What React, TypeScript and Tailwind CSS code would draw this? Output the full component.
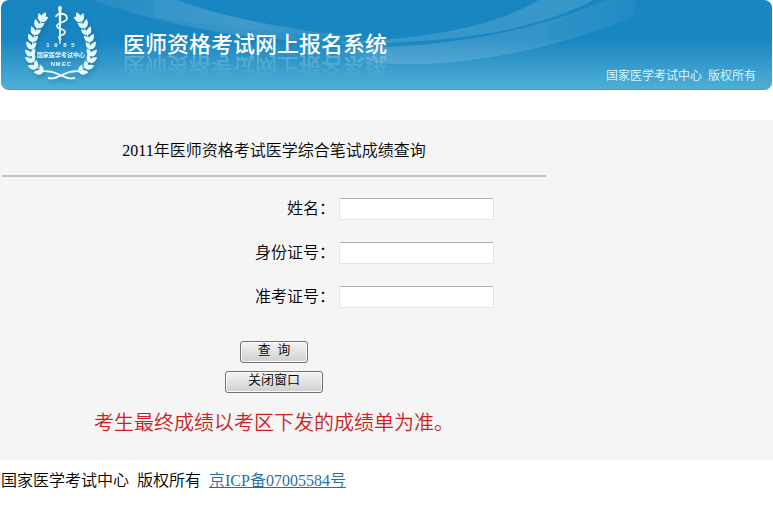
const FIELDS = [
  { id: "name", label: "姓名：" },
  { id: "idCard", label: "身份证号：" },
  { id: "ticket", label: "准考证号：" },
];

// Nodes along one branch of the wreath; a is the growth direction in degrees.
const NODES = [
  { x: 41, y: 22, a: 22 },
  { x: 37, y: 28, a: 25 },
  { x: 34, y: 35, a: 20 },
  { x: 32, y: 42, a: 12 },
  { x: 31, y: 49, a: 4 },
  { x: 31, y: 56, a: -6 },
  { x: 32, y: 62, a: -18 },
  { x: 36, y: 68, a: -34 },
  { x: 42, y: 72, a: -50 },
];

const LEAF = "M0 0C-4-2-3-6 0-9.500C2.500-6 3-2 0 0";

function Branch() {
  return (
    <g>
      <path d={LEAF} transform="translate(41 21) rotate(22)" />
      {NODES.map((n, i) => (
        <g key={i} transform={`translate(${n.x} ${n.y})`}>
          <path d={LEAF} transform={`rotate(${n.a - 42})`} />
          <path d={LEAF} transform={`rotate(${n.a + 28}) scale(.85)`} />
        </g>
      ))}
      <path d="M42 19C32 32 28 50 34 65c4 5 9 7 16 7" fill="none" stroke="currentColor" strokeWidth="1" />
    </g>
  );
}

function Emblem() {
  return (
    <svg
      viewBox="0 0 120 90"
      width="120"
      height="90"
      className="shrink-0 text-[#e9fbff] drop-shadow-[2px_3px_2px_#0b5f9466]"
      fill="currentColor"
      aria-hidden="true"
    >
      <Branch />
      <g transform="translate(120 0) scale(-1 1)">
        <Branch />
      </g>
      <path d="M57.500 8h3L59.600 44h-1.200z" />
      <circle cx="59" cy="8" r="2" />
      <path
        d="M55 17c0-4 10-5 11 1 0 5-10 4-10 8s8 2 8 6-6 2-6 6l2 2"
        fill="none"
        stroke="currentColor"
        strokeWidth="1.800"
      />
      <path
        d="M38 72c10-2 15 0 21 3 7 3 9 4 15 3M82 72c-10-2-15 0-21 3-7 3-8 4-14 3"
        fill="none"
        stroke="currentColor"
        strokeWidth="1.800"
      />
      <g textAnchor="middle" fontWeight="700">
        <text x="47 55 64 72" y="47" fontSize="6" fontFamily="Liberation Sans">1985</text>
        <text x="60" y="57" fontSize="6" fontFamily="Noto Sans CJK SC">国家医学考试中心</text>
        <text x="52 57 63 68" y="66" fontSize="6" fontFamily="Liberation Sans">NMEC</text>
      </g>
    </svg>
  );
}

function Swoosh() {
  return (
    <svg viewBox="0 0 770 90" preserveAspectRatio="none" className="absolute inset-0 h-full w-full" fill="none" aria-hidden="true">
      <defs>
        <linearGradient id="fadeLeft" gradientUnits="userSpaceOnUse" x1="100" y1="0" x2="380" y2="0">
          <stop offset="0" stopColor="#fff" stopOpacity=".06" />
          <stop offset=".5" stopColor="#fff" stopOpacity=".14" />
          <stop offset="1" stopColor="#fff" stopOpacity="0" />
        </linearGradient>
        <linearGradient id="fadeRight" gradientUnits="userSpaceOnUse" x1="340" y1="0" x2="640" y2="0">
          <stop offset="0" stopColor="#fff" stopOpacity="0" />
          <stop offset=".15" stopColor="#fff" stopOpacity=".14" />
          <stop offset=".7" stopColor="#fff" stopOpacity=".12" />
          <stop offset="1" stopColor="#fff" stopOpacity=".03" />
        </linearGradient>
      </defs>
      <path d="M90 0H177C215 16 290 32 390 41C290 48 190 34 90 0Z" fill="url(#fadeLeft)" />
      <path d="M152 0H177C215 16 290 32 390 41C310 36 230 30 152 17Z" fill="#fff" fillOpacity=".04" />
      <path d="M340 42C430 40 495 25 537 0H592C535 30 460 44 340 44Z" fill="#fff" fillOpacity=".14" />
      <path d="M340 49C450 48 530 32 605 0H636L631 17C560 47 480 64 415 65C385 65 360 63 340 61Z" fill="url(#fadeRight)" />
      <path d="M543 26L583 11L588 32L549 41Z" fill="#1886c1" fillOpacity=".12" />
    </svg>
  );
}

function Header() {
  return (
    <header className="relative mx-px flex h-[90px] items-start overflow-hidden rounded-lg border-b border-[#7d8b9c] bg-linear-to-b from-[#1886c1] from-45% to-[#4eafd5]">
      <Swoosh />
      <div className="relative flex w-full">
        <Emblem />
        <h1 className="relative mt-[29px] ml-0.5 h-8 text-[22px] leading-8 font-medium text-white after:absolute after:top-5 after:left-0 after:-scale-y-100 after:mask-t-from-0% after:mask-t-to-90% after:whitespace-nowrap after:opacity-30 after:content-['医师资格考试网上报名系统']">
          医师资格考试网上报名系统
        </h1>
        <p className="mt-16 mr-4 ml-auto text-xs leading-6 font-normal whitespace-pre text-[#d9f4fb]">
          国家医学考试中心  版权所有
        </p>
      </div>
    </header>
  );
}

const buttonClass =
  "h-[22px] rounded-[3px] border border-[#707070] bg-linear-to-b from-[#f4f4f4] to-[#cfcfcf] pb-1 text-[13px] leading-4 whitespace-pre text-black shadow-[inset_0_0_0_1px_#fbfbfb]";

export default function App() {
  return (
    <div
      lang="zh-CN"
      className="min-h-screen bg-white font-['Liberation_Serif','Noto_Sans_CJK_SC',serif] text-base font-[350] text-black"
    >
      <Header />
      <main className="mt-[30px] bg-[#f5f5f5] pb-[23px]">
        <form className="max-w-[548px]" onSubmit={(e) => e.preventDefault()}>
          <h2 className="pt-[19px] pb-3 text-center leading-6">2011年医师资格考试医学综合笔试成绩查询</h2>
          <hr className="mx-0.5 border-t-2 border-[#c3c3c3]" />
          <div className="mt-[21px] flex flex-col gap-[22px]">
            {FIELDS.map((field) => (
              <div key={field.id} className="flex h-[22px] items-center gap-1">
                <label htmlFor={field.id} className="w-[335px] text-right">
                  {field.label}
                </label>
                <input
                  id={field.id}
                  type="text"
                  className="h-[22px] w-[155px] rounded-[2px] border border-[#e2e3ea] border-t-[#abadb3] bg-white px-1"
                />
              </div>
            ))}
          </div>
          <div className="mt-[33px] flex flex-col items-center gap-2">
            <button type="submit" className={`${buttonClass} w-[68px]`}>
              查  询
            </button>
            <button type="button" className={`${buttonClass} w-[98px]`}>
              关闭窗口
            </button>
          </div>
          <p className="mt-4 text-center text-xl leading-7 text-[#cc1f1f]">考生最终成绩以考区下发的成绩单为准。</p>
        </form>
      </main>
      <footer className="mt-[9px] flex px-px leading-6 whitespace-pre">
        <span>国家医学考试中心  版权所有  </span>
        <a href="#" className="text-[#1f6fa8] underline">
          京ICP备07005584号
        </a>
      </footer>
    </div>
  );
}
